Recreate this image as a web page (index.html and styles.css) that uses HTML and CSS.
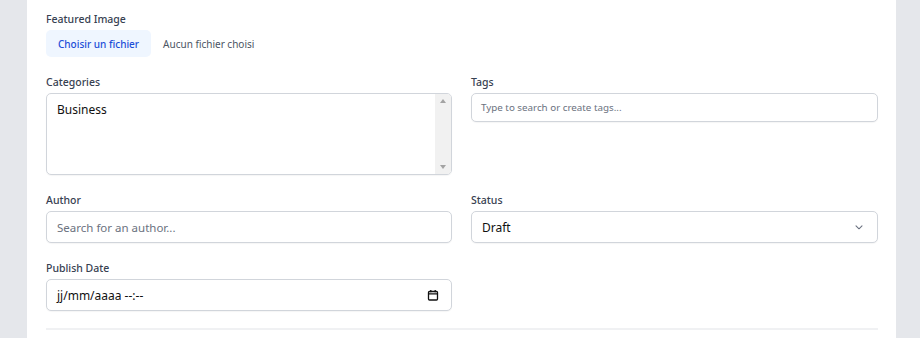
FILE: index.html
```html
<!DOCTYPE html>
<html lang="fr">
<head>
  <meta charset="UTF-8">
  <meta name="viewport" content="width=device-width,initial-scale=1">
  <title>Post settings</title>
  <link rel="stylesheet" href="styles.css">
</head>
<body>
  <div class="panel">
    <!-- Image -->
    <div class="field">
      <span class="label">Featured Image</span>
      <div class="file-row">
        <span class="file-btn">Choisir un fichier</span>
        <span class="file-name">Aucun fichier choisi</span>
      </div>
    </div>

    <div class="grid">
      <!-- Catégories -->
      <div class="field">
        <span class="label">Categories</span>
        <div class="listbox">
          <div class="options"><div class="option">Business</div></div>
          <div class="scrollbar">
            <span class="arrow up"></span>
            <span class="arrow down"></span>
          </div>
        </div>
      </div>
      <div class="field">
        <span class="label">Tags</span>
        <div class="input small placeholder">Type to search or create tags...</div>
      </div>

      <!-- Auteur / statut -->
      <div class="field">
        <span class="label">Author</span>
        <div class="input tall placeholder">Search for an author...</div>
      </div>
      <div class="field">
        <span class="label">Status</span>
        <div class="input tall select">
          <span class="value">Draft</span>
          <svg width="12" height="12" viewBox="0 0 20 20" fill="none" stroke="#6b7280" stroke-width="1.8" stroke-linecap="round" stroke-linejoin="round"><path d="M5 8l5 5 5-5"/></svg>
        </div>
      </div>

      <!-- Date -->
      <div class="field">
        <span class="label">Publish Date</span>
        <div class="input tall select">
          <span class="value">jj/mm/aaaa --:--</span>
          <svg width="12" height="12" viewBox="0 0 12 12" fill="none" stroke="#111" stroke-width="1.3"><rect x="1.5" y="2.5" width="9" height="8.5" rx="1"/><path d="M1.5 4.8h9M3.8 1v2.3M8.2 1v2.3"/></svg>
        </div>
      </div>
    </div>

    <hr class="divider">
  </div>
</body>
</html>
```

FILE: styles.css
```css
* { margin:0; padding:0; box-sizing:border-box; }
html, body {
  width:100%; height:100%;
  background:#e5e7eb;
  font-family:'Noto Sans', 'Open Sans', sans-serif;
  overflow:hidden;
}
body { padding:0 24px 0 27px; }
/* Panneau blanc */
.panel {
  background:#fff;
  height:100%;
  padding:12px 18px 0 19px;
}
.field { display:flex; flex-direction:column; }
.label {
  font-size:10.5px; line-height:14px;
  font-weight:500; color:#374151;
  margin-bottom:4px;
}
/* Fichier */
.file-row { display:flex; align-items:center; gap:12px; }
.file-btn {
  background:#eff6ff; color:#1d4ed8;
  font-size:10px; font-weight:500;
  height:27px; padding:0 12px;
  display:flex; align-items:center;
  border-radius:5px;
}
.file-name { font-size:10px; color:#4b5563; }
/* Grille */
.grid {
  display:grid;
  grid-template-columns:406px 407px;
  column-gap:19px; row-gap:18px;
  margin-top:18px;
  align-items:start;
}
.input {
  border:1px solid #d1d5db;
  border-radius:5px;
  background:#fff;
  color:#111827;
  display:flex; align-items:center;
  box-shadow:0 1px 1px rgba(0,0,0,.04);
}
.input.small { height:29px; padding:0 9px; font-size:9.8px; }
.input.tall { height:32px; padding:0 10px; font-size:11.5px; }
.placeholder { color:#6b7280; }
.select { justify-content:space-between; }
.select svg { margin-right:2px; }
.value { color:#111; font-size:12px; }
/* Liste multiple */
.listbox {
  height:82px;
  border:1px solid #d1d5db;
  border-radius:5px;
  display:flex;
  overflow:hidden;
  box-shadow:0 1px 1px rgba(0,0,0,.04);
}
.options { flex:1; padding:8px 10px; }
.option { font-size:12px; color:#111; line-height:16px; }
.scrollbar {
  width:16px; background:#f1f1f1;
  display:flex; flex-direction:column; justify-content:space-between; align-items:center;
  padding:5px 0;
}
.arrow { width:0; height:0; border-left:3.5px solid transparent; border-right:3.5px solid transparent; }
.arrow.up { border-bottom:4px solid #a3a3a3; }
.arrow.down { border-top:4px solid #a3a3a3; }
/* Séparateur */
.divider {
  border:none; border-top:2px solid #f0f1f3;
  margin-top:17px;
}
```
